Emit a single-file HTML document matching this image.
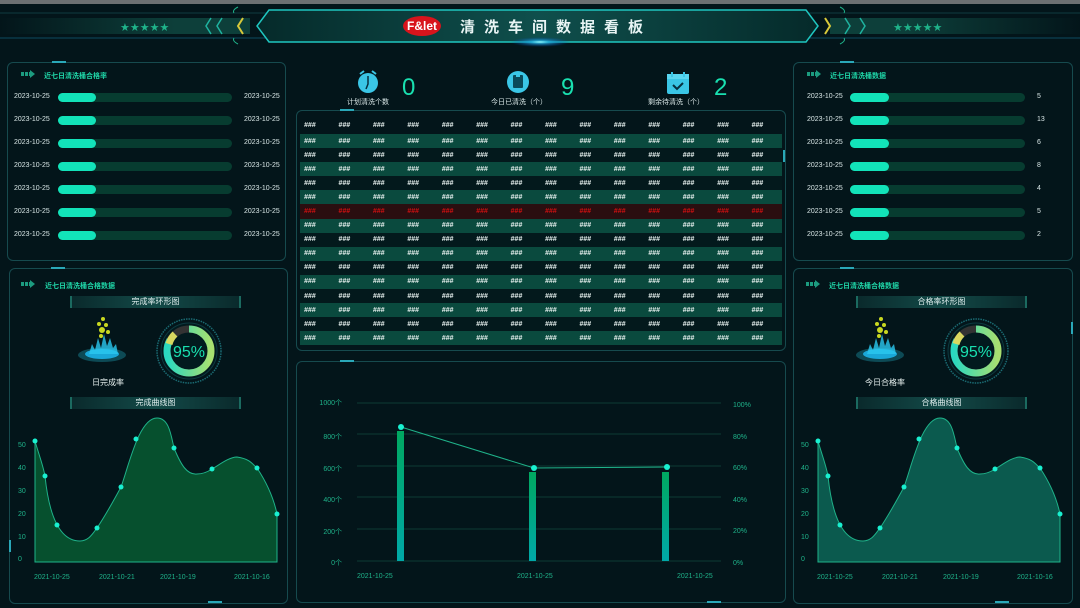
<!DOCTYPE html>
<html><head><meta charset="utf-8">
<style>
*{margin:0;padding:0;box-sizing:border-box}
body{width:1080px;height:608px;overflow:hidden;background:#03151a;font-family:"Liberation Sans","Noto Sans CJK SC",sans-serif;position:relative;color:#cfe}
.a{position:absolute}
.panel{position:absolute;border:1px solid #164a4e;border-radius:6px}
.t{position:absolute;font-size:7px;color:#1fd6a8;font-weight:bold}
.d{position:absolute;font-size:7px;color:#d8e6e6}
.bar{position:absolute;height:9px;border-radius:5px;background:#073c30}
.bar i{display:block;height:9px;border-radius:5px;background:#12e3b9}
table{border-collapse:collapse;position:absolute;left:300px;top:117px;width:482px;table-layout:fixed}
td{font-size:7px;color:#e6f0ee;height:14.1px;padding-left:4px;font-style:italic;font-weight:bold}
tr.h td{height:17px;background:#03151a}
tr.g td{background:#0a4a3e}
tr.k td{background:#03191c}
tr.r td{background:#2a0e10;color:#d01010}
.sub{position:absolute;height:12px;background:linear-gradient(90deg,#0a2a2c,#134a48 50%,#0a2a2c);border-left:2px solid #1b6a60;border-right:2px solid #1b6a60;font-size:8px;color:#dfeeee;text-align:center;line-height:12px}
.arrow{position:absolute;width:14px;height:8px}
.tick{position:absolute;width:14px;height:2px;background:#2aa8b8}
</style></head><body>
<div class="a" style="left:0;top:0;width:1080px;height:4px;background:#6c7072"></div>
<!-- header -->
<svg class="a" style="left:0;top:4px" width="1080" height="50">
<defs><linearGradient id="hb" x1="0" x2="1"><stop offset="0" stop-color="#052a2a"/><stop offset=".5" stop-color="#0f4f4c"/><stop offset="1" stop-color="#052a2a"/></linearGradient>
<radialGradient id="gl"><stop offset="0" stop-color="#9ff"/><stop offset=".3" stop-color="#2ad" stop-opacity=".8"/><stop offset="1" stop-color="#04a" stop-opacity="0"/></radialGradient>
<linearGradient id="sb" x1="0" x2="1"><stop offset="0" stop-color="#03151a"/><stop offset=".7" stop-color="#0d3f3a"/><stop offset="1" stop-color="#0d3f3a"/></linearGradient></defs>
<line x1="0" y1="9" x2="1080" y2="9" stroke="#0f3a40"/>
<line x1="0" y1="34" x2="1080" y2="34" stroke="#0e4a60"/>
<rect x="0" y="14" width="250" height="16" fill="url(#sb)"/>
<rect x="830" y="14" width="250" height="16" fill="url(#sb)" transform="matrix(-1 0 0 1 1910 0)"/>
<text x="120" y="27" fill="#1fb38a" font-size="11" font-family="DejaVu Sans">★★★★★</text>
<text x="893" y="27" fill="#1fb38a" font-size="11" font-family="DejaVu Sans">★★★★★</text>
<path d="M211 14l-5 8 5 8M222 14l-5 8 5 8" stroke="#1fb3a0" fill="none" stroke-width="1.5"/>
<path d="M243 14l-5 8 5 8" stroke="#d8c83a" fill="none" stroke-width="2"/>
<path d="M825 14l5 8-5 8" stroke="#d8c83a" fill="none" stroke-width="2"/>
<path d="M845 14l5 8-5 8M860 14l5 8-5 8" stroke="#1fb3a0" fill="none" stroke-width="1.5"/>
<path d="M269 6H806L818 22L806 38H269L257 22Z" fill="url(#hb)" stroke="#1fc6c0" stroke-width="1.5"/>
<path d="M238 3q-6 3-4 6M238 40q-6-3-4-6M840 3q6 3 4 6M840 40q6-3 4-6" stroke="#1fb38a" fill="none"/>
<ellipse cx="540" cy="38" rx="30" ry="5" fill="url(#gl)"/>
<ellipse cx="422" cy="22" rx="19" ry="10" fill="#d8141c"/>
<text x="422" y="26" fill="#fff" font-size="12" font-weight="bold" text-anchor="middle" font-family="Liberation Sans">F&amp;let</text>
<text x="460" y="28" fill="#e8f4f4" font-size="15" font-weight="bold" letter-spacing="9" font-family="Noto Sans CJK SC">清洗车间数据看板</text>
</svg>

<!-- left panel 1 -->
<div class="panel" style="left:7px;top:62px;width:279px;height:199px"></div>
<div class="tick" style="left:52px;top:61px"></div>
<svg class="arrow" style="left:21px;top:70px" viewBox="0 0 14 8"><path d="M0 2h3v4H0zM4 2h3v4H4zM8 2h1V0l5 4-5 4V6H8z" fill="#1c9c80"/></svg>
<div class="t" style="left:44px;top:71px">近七日清洗桶合格率</div>
<div class="d" style="left:14px;top:93px">2023-10-25</div><div class="bar" style="left:58px;top:93px;width:174px"><i style="width:38px"></i></div><div class="d" style="left:244px;top:93px">2023-10-25</div>
<div class="d" style="left:14px;top:116px">2023-10-25</div><div class="bar" style="left:58px;top:116px;width:174px"><i style="width:38px"></i></div><div class="d" style="left:244px;top:116px">2023-10-25</div>
<div class="d" style="left:14px;top:139px">2023-10-25</div><div class="bar" style="left:58px;top:139px;width:174px"><i style="width:38px"></i></div><div class="d" style="left:244px;top:139px">2023-10-25</div>
<div class="d" style="left:14px;top:162px">2023-10-25</div><div class="bar" style="left:58px;top:162px;width:174px"><i style="width:38px"></i></div><div class="d" style="left:244px;top:162px">2023-10-25</div>
<div class="d" style="left:14px;top:185px">2023-10-25</div><div class="bar" style="left:58px;top:185px;width:174px"><i style="width:38px"></i></div><div class="d" style="left:244px;top:185px">2023-10-25</div>
<div class="d" style="left:14px;top:208px">2023-10-25</div><div class="bar" style="left:58px;top:208px;width:174px"><i style="width:38px"></i></div><div class="d" style="left:244px;top:208px">2023-10-25</div>
<div class="d" style="left:14px;top:231px">2023-10-25</div><div class="bar" style="left:58px;top:231px;width:174px"><i style="width:38px"></i></div><div class="d" style="left:244px;top:231px">2023-10-25</div>

<!-- right panel 1 -->
<div class="panel" style="left:793px;top:62px;width:280px;height:199px"></div>
<div class="tick" style="left:840px;top:61px"></div>
<svg class="arrow" style="left:807px;top:70px" viewBox="0 0 14 8"><path d="M0 2h3v4H0zM4 2h3v4H4zM8 2h1V0l5 4-5 4V6H8z" fill="#1c9c80"/></svg>
<div class="t" style="left:830px;top:71px">近七日清洗桶数据</div>
<div class="d" style="left:807px;top:93px">2023-10-25</div><div class="bar" style="left:850px;top:93px;width:175px"><i style="width:39px"></i></div><div class="d" style="left:1037px;top:93px">5</div>
<div class="d" style="left:807px;top:116px">2023-10-25</div><div class="bar" style="left:850px;top:116px;width:175px"><i style="width:39px"></i></div><div class="d" style="left:1037px;top:116px">13</div>
<div class="d" style="left:807px;top:139px">2023-10-25</div><div class="bar" style="left:850px;top:139px;width:175px"><i style="width:39px"></i></div><div class="d" style="left:1037px;top:139px">6</div>
<div class="d" style="left:807px;top:162px">2023-10-25</div><div class="bar" style="left:850px;top:162px;width:175px"><i style="width:39px"></i></div><div class="d" style="left:1037px;top:162px">8</div>
<div class="d" style="left:807px;top:185px">2023-10-25</div><div class="bar" style="left:850px;top:185px;width:175px"><i style="width:39px"></i></div><div class="d" style="left:1037px;top:185px">4</div>
<div class="d" style="left:807px;top:208px">2023-10-25</div><div class="bar" style="left:850px;top:208px;width:175px"><i style="width:39px"></i></div><div class="d" style="left:1037px;top:208px">5</div>
<div class="d" style="left:807px;top:231px">2023-10-25</div><div class="bar" style="left:850px;top:231px;width:175px"><i style="width:39px"></i></div><div class="d" style="left:1037px;top:231px">2</div>

<!-- stats -->
<svg class="a" style="left:356px;top:69px" width="24" height="26" viewBox="0 0 24 26"><circle cx="12" cy="14" r="10" fill="#3ac6e6"/><path d="M4 5l4-3M20 5l-4-3" stroke="#3ac6e6" stroke-width="2"/><path d="M12 7v8l-2 5" stroke="#063040" stroke-width="1.5" fill="none"/></svg>
<div class="a" style="left:402px;top:74px;font-size:24px;color:#19e0b0">0</div>
<div class="d" style="left:347px;top:97px">计划清洗个数</div>
<svg class="a" style="left:506px;top:69px" width="24" height="26" viewBox="0 0 24 26"><circle cx="12" cy="13" r="11" fill="#3ac6e6"/><rect x="7" y="6" width="10" height="13" rx="1" fill="#0a4a5a"/><rect x="10" y="5" width="4" height="3" fill="#3ac6e6"/></svg>
<div class="a" style="left:561px;top:74px;font-size:24px;color:#19e0b0">9</div>
<div class="d" style="left:491px;top:97px">今日已清洗（个）</div>
<svg class="a" style="left:666px;top:71px" width="24" height="24" viewBox="0 0 24 24"><rect x="1" y="3" width="22" height="20" rx="2" fill="#3ac6e6"/><rect x="1" y="3" width="22" height="5" fill="#5ad6f0"/><path d="M6 1v5M18 1v5" stroke="#3ac6e6" stroke-width="2"/><path d="M7 14l4 4 6-6" stroke="#063040" stroke-width="2" fill="none"/></svg>
<div class="a" style="left:714px;top:74px;font-size:24px;color:#19e0b0">2</div>
<div class="d" style="left:648px;top:97px">剩余待清洗（个）</div>

<!-- table panel -->
<div class="panel" style="left:296px;top:110px;width:490px;height:241px"></div>
<div class="tick" style="left:340px;top:109px"></div>
<div class="a" style="left:783px;top:150px;width:2px;height:12px;background:#2aa8b8"></div>
<table>
<tr class="h"><td>###</td><td>###</td><td>###</td><td>###</td><td>###</td><td>###</td><td>###</td><td>###</td><td>###</td><td>###</td><td>###</td><td>###</td><td>###</td><td>###</td></tr>
<tr class="g"><td>###</td><td>###</td><td>###</td><td>###</td><td>###</td><td>###</td><td>###</td><td>###</td><td>###</td><td>###</td><td>###</td><td>###</td><td>###</td><td>###</td></tr>
<tr class="k"><td>###</td><td>###</td><td>###</td><td>###</td><td>###</td><td>###</td><td>###</td><td>###</td><td>###</td><td>###</td><td>###</td><td>###</td><td>###</td><td>###</td></tr>
<tr class="g"><td>###</td><td>###</td><td>###</td><td>###</td><td>###</td><td>###</td><td>###</td><td>###</td><td>###</td><td>###</td><td>###</td><td>###</td><td>###</td><td>###</td></tr>
<tr class="k"><td>###</td><td>###</td><td>###</td><td>###</td><td>###</td><td>###</td><td>###</td><td>###</td><td>###</td><td>###</td><td>###</td><td>###</td><td>###</td><td>###</td></tr>
<tr class="g"><td>###</td><td>###</td><td>###</td><td>###</td><td>###</td><td>###</td><td>###</td><td>###</td><td>###</td><td>###</td><td>###</td><td>###</td><td>###</td><td>###</td></tr>
<tr class="r"><td>###</td><td>###</td><td>###</td><td>###</td><td>###</td><td>###</td><td>###</td><td>###</td><td>###</td><td>###</td><td>###</td><td>###</td><td>###</td><td>###</td></tr>
<tr class="g"><td>###</td><td>###</td><td>###</td><td>###</td><td>###</td><td>###</td><td>###</td><td>###</td><td>###</td><td>###</td><td>###</td><td>###</td><td>###</td><td>###</td></tr>
<tr class="k"><td>###</td><td>###</td><td>###</td><td>###</td><td>###</td><td>###</td><td>###</td><td>###</td><td>###</td><td>###</td><td>###</td><td>###</td><td>###</td><td>###</td></tr>
<tr class="g"><td>###</td><td>###</td><td>###</td><td>###</td><td>###</td><td>###</td><td>###</td><td>###</td><td>###</td><td>###</td><td>###</td><td>###</td><td>###</td><td>###</td></tr>
<tr class="k"><td>###</td><td>###</td><td>###</td><td>###</td><td>###</td><td>###</td><td>###</td><td>###</td><td>###</td><td>###</td><td>###</td><td>###</td><td>###</td><td>###</td></tr>
<tr class="g"><td>###</td><td>###</td><td>###</td><td>###</td><td>###</td><td>###</td><td>###</td><td>###</td><td>###</td><td>###</td><td>###</td><td>###</td><td>###</td><td>###</td></tr>
<tr class="k"><td>###</td><td>###</td><td>###</td><td>###</td><td>###</td><td>###</td><td>###</td><td>###</td><td>###</td><td>###</td><td>###</td><td>###</td><td>###</td><td>###</td></tr>
<tr class="g"><td>###</td><td>###</td><td>###</td><td>###</td><td>###</td><td>###</td><td>###</td><td>###</td><td>###</td><td>###</td><td>###</td><td>###</td><td>###</td><td>###</td></tr>
<tr class="k"><td>###</td><td>###</td><td>###</td><td>###</td><td>###</td><td>###</td><td>###</td><td>###</td><td>###</td><td>###</td><td>###</td><td>###</td><td>###</td><td>###</td></tr>
<tr class="g"><td>###</td><td>###</td><td>###</td><td>###</td><td>###</td><td>###</td><td>###</td><td>###</td><td>###</td><td>###</td><td>###</td><td>###</td><td>###</td><td>###</td></tr>
</table>

<!-- center chart panel -->
<div class="panel" style="left:296px;top:361px;width:490px;height:242px"></div>
<div class="tick" style="left:340px;top:360px"></div>
<div class="tick" style="left:707px;top:601px"></div>
<svg class="a" style="left:296px;top:361px" width="490" height="242">
<defs><linearGradient id="bg" x1="0" y1="0" x2="0" y2="1"><stop offset="0" stop-color="#00a860"/><stop offset="1" stop-color="#00a8a8"/></linearGradient></defs>
<g stroke="#0d3a34" stroke-width="1"><line x1="61" y1="42" x2="425" y2="42"/><line x1="61" y1="73" x2="425" y2="73"/><line x1="61" y1="105" x2="425" y2="105"/><line x1="61" y1="136" x2="425" y2="136"/><line x1="61" y1="168" x2="425" y2="168"/><line x1="61" y1="200" x2="425" y2="200"/></g>
<g fill="#1fb38a" font-size="7" font-family="Liberation Sans, Noto Sans CJK SC" text-anchor="end"><text x="46" y="44">1000个</text><text x="46" y="78">800个</text><text x="46" y="110">600个</text><text x="46" y="141">400个</text><text x="46" y="173">200个</text><text x="46" y="204">0个</text></g>
<g fill="#1fb38a" font-size="7" font-family="Liberation Sans"><text x="437" y="46">100%</text><text x="437" y="78">80%</text><text x="437" y="109">60%</text><text x="437" y="141">40%</text><text x="437" y="172">20%</text><text x="437" y="204">0%</text><text x="61" y="217">2021-10-25</text><text x="221" y="217">2021-10-25</text><text x="381" y="217">2021-10-25</text></g>
<rect x="101" y="70" width="7" height="130" fill="url(#bg)"/><rect x="233" y="111" width="7" height="89" fill="url(#bg)"/><rect x="366" y="111" width="7" height="89" fill="url(#bg)"/>
<polyline points="105,66 238,107 371,106" fill="none" stroke="#1fb38a" stroke-width="1"/>
<g fill="#19f0d0"><circle cx="105" cy="66" r="3"/><circle cx="238" cy="107" r="3"/><circle cx="371" cy="106" r="3"/></g>
</svg>

<!-- left panel 2 -->
<div class="panel" style="left:9px;top:268px;width:279px;height:336px"></div>
<div class="tick" style="left:51px;top:267px"></div>
<div class="tick" style="left:208px;top:601px"></div>
<div class="a" style="left:9px;top:540px;width:2px;height:12px;background:#2aa8b8"></div>
<svg class="arrow" style="left:21px;top:280px" viewBox="0 0 14 8"><path d="M0 2h3v4H0zM4 2h3v4H4zM8 2h1V0l5 4-5 4V6H8z" fill="#1c9c80"/></svg>
<div class="t" style="left:45px;top:281px">近七日清洗桶合格数据</div>
<div class="sub" style="left:70px;top:296px;width:171px">完成率环形图</div>
<div class="sub" style="left:70px;top:397px;width:171px">完成曲线图</div>
<svg class="a" style="left:75px;top:315px" width="55" height="50">
<g fill="#c8d820"><circle cx="28" cy="4" r="2"/><circle cx="24" cy="9" r="2"/><circle cx="31" cy="10" r="2"/><circle cx="27" cy="15" r="3"/><circle cx="33" cy="17" r="2"/><circle cx="26" cy="21" r="2"/></g>
<ellipse cx="27" cy="40" rx="24" ry="7" fill="#0d4a55"/><ellipse cx="27" cy="39" rx="17" ry="5" fill="#1aa8d8"/>
<path d="M14 39l3-10 3 6 3-12 3 10 3-14 3 12 3-8 3 10 3-4 2 10z" fill="#2ac8f0" opacity=".8"/>
</svg>
<div class="a" style="left:92px;top:377px;font-size:8px;color:#e6f0ee">日完成率</div>
<svg class="a" style="left:155px;top:317px" width="68" height="68">
<defs><linearGradient id="dn" x1="0" y1="0" x2="0" y2="1"><stop offset="0" stop-color="#2ad8c0"/><stop offset="1" stop-color="#a8e070"/></linearGradient></defs>
<circle cx="34" cy="34" r="32" fill="none" stroke="#1a6a72" stroke-width="1.5" stroke-dasharray="1.5 1"/>
<circle cx="34" cy="34" r="28" fill="#021a1e" stroke="#0d3a40"/>
<circle cx="34" cy="34" r="22" fill="none" stroke="#333" stroke-width="7"/>
<circle cx="34" cy="34" r="22" fill="none" stroke="url(#dn)" stroke-width="7" stroke-dasharray="115 138" transform="rotate(-90 34 34)"/>
<path d="M20 17a22 22 0 0 0 -6 10" stroke="#d8d860" stroke-width="7" fill="none"/>
<text x="34" y="40" fill="#19e0b0" font-size="16" text-anchor="middle" font-family="Liberation Sans">95%</text>
</svg>
<svg class="a" style="left:9px;top:405px" width="279" height="190">
<g fill="#1fb38a" font-size="7" font-family="Liberation Sans"><text x="9" y="42">50</text><text x="9" y="65">40</text><text x="9" y="88">30</text><text x="9" y="111">20</text><text x="9" y="134">10</text><text x="9" y="156">0</text>
<text x="25" y="174">2021-10-25</text><text x="90" y="174">2021-10-21</text><text x="151" y="174">2021-10-19</text><text x="225" y="174">2021-10-16</text></g>
<path d="M26 36C30 50 34 60 36 71C40 110 50 136 71 136C80 136 84 128 88 123C98 108 105 95 112 82C120 60 130 13 148 13C160 13 162 30 165 43C172 60 178 70 188 69C195 69 200 66 203 64C210 60 220 52 228 52C242 54 244 60 248 63C256 75 264 90 268 109V157H26Z" fill="#06502e" stroke="#1fb38a" stroke-width="1"/>
<g fill="#19f0d0"><circle cx="26" cy="36" r="2.5"/><circle cx="36" cy="71" r="2.5"/><circle cx="48" cy="120" r="2.5"/><circle cx="88" cy="123" r="2.5"/><circle cx="112" cy="82" r="2.5"/><circle cx="127" cy="34" r="2.5"/><circle cx="165" cy="43" r="2.5"/><circle cx="203" cy="64" r="2.5"/><circle cx="248" cy="63" r="2.5"/><circle cx="268" cy="109" r="2.5"/></g>
</svg>

<!-- right panel 2 -->
<div class="panel" style="left:793px;top:268px;width:280px;height:336px"></div>
<div class="tick" style="left:840px;top:267px"></div>
<div class="tick" style="left:995px;top:601px"></div>
<div class="a" style="left:1071px;top:322px;width:2px;height:12px;background:#2aa8b8"></div>
<svg class="arrow" style="left:806px;top:280px" viewBox="0 0 14 8"><path d="M0 2h3v4H0zM4 2h3v4H4zM8 2h1V0l5 4-5 4V6H8z" fill="#1c9c80"/></svg>
<div class="t" style="left:829px;top:281px">近七日清洗桶合格数据</div>
<div class="sub" style="left:856px;top:296px;width:171px">合格率环形图</div>
<div class="sub" style="left:856px;top:397px;width:171px">合格曲线图</div>
<svg class="a" style="left:853px;top:315px" width="55" height="50">
<g fill="#c8d820"><circle cx="28" cy="4" r="2"/><circle cx="24" cy="9" r="2"/><circle cx="31" cy="10" r="2"/><circle cx="27" cy="15" r="3"/><circle cx="33" cy="17" r="2"/><circle cx="26" cy="21" r="2"/></g>
<ellipse cx="27" cy="40" rx="24" ry="7" fill="#0d4a55"/><ellipse cx="27" cy="39" rx="17" ry="5" fill="#1aa8d8"/>
<path d="M14 39l3-10 3 6 3-12 3 10 3-14 3 12 3-8 3 10 3-4 2 10z" fill="#2ac8f0" opacity=".8"/>
</svg>
<div class="a" style="left:865px;top:377px;font-size:8px;color:#e6f0ee">今日合格率</div>
<svg class="a" style="left:942px;top:317px" width="68" height="68">
<circle cx="34" cy="34" r="32" fill="none" stroke="#1a6a72" stroke-width="1.5" stroke-dasharray="1.5 1"/>
<circle cx="34" cy="34" r="28" fill="#021a1e" stroke="#0d3a40"/>
<circle cx="34" cy="34" r="22" fill="none" stroke="#333" stroke-width="7"/>
<circle cx="34" cy="34" r="22" fill="none" stroke="url(#dn)" stroke-width="7" stroke-dasharray="115 138" transform="rotate(-90 34 34)"/>
<path d="M20 17a22 22 0 0 0 -6 10" stroke="#d8d860" stroke-width="7" fill="none"/>
<text x="34" y="40" fill="#19e0b0" font-size="16" text-anchor="middle" font-family="Liberation Sans">95%</text>
</svg>
<svg class="a" style="left:792px;top:405px" width="279" height="190">
<g fill="#1fb38a" font-size="7" font-family="Liberation Sans"><text x="9" y="42">50</text><text x="9" y="65">40</text><text x="9" y="88">30</text><text x="9" y="111">20</text><text x="9" y="134">10</text><text x="9" y="156">0</text>
<text x="25" y="174">2021-10-25</text><text x="90" y="174">2021-10-21</text><text x="151" y="174">2021-10-19</text><text x="225" y="174">2021-10-16</text></g>
<path d="M26 36C30 50 34 60 36 71C40 110 50 136 71 136C80 136 84 128 88 123C98 108 105 95 112 82C120 60 130 13 148 13C160 13 162 30 165 43C172 60 178 70 188 69C195 69 200 66 203 64C210 60 220 52 228 52C242 54 244 60 248 63C256 75 264 90 268 109V157H26Z" fill="#0b5a4e" stroke="#1fb38a" stroke-width="1"/>
<g fill="#19f0d0"><circle cx="26" cy="36" r="2.5"/><circle cx="36" cy="71" r="2.5"/><circle cx="48" cy="120" r="2.5"/><circle cx="88" cy="123" r="2.5"/><circle cx="112" cy="82" r="2.5"/><circle cx="127" cy="34" r="2.5"/><circle cx="165" cy="43" r="2.5"/><circle cx="203" cy="64" r="2.5"/><circle cx="248" cy="63" r="2.5"/><circle cx="268" cy="109" r="2.5"/></g>
</svg>
</body></html>
